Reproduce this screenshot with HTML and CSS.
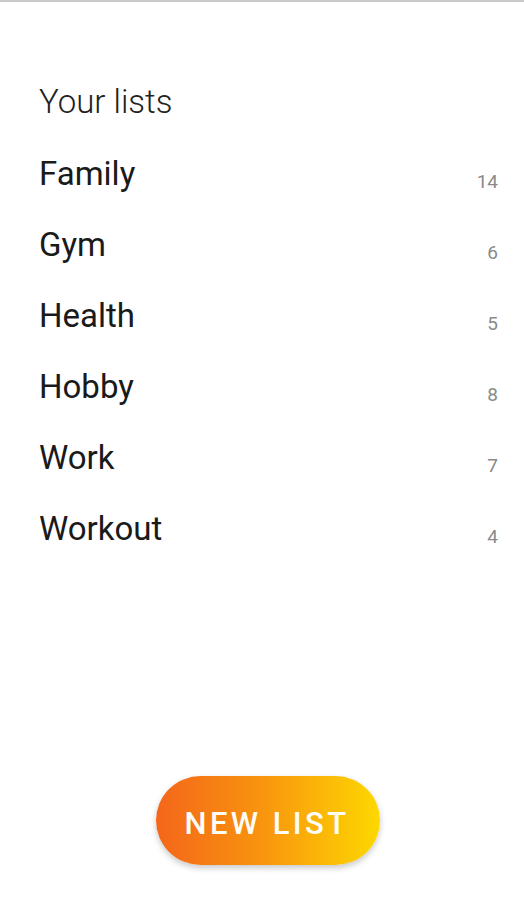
FILE: index.html
```html
<!DOCTYPE html>
<html>
<head>
<meta charset="utf-8">
<link rel="stylesheet" href="styles.css">
</head>
<body>
<div class="screen">
  <div class="topline"></div>
  <main class="content">
    <h1 class="title">Your lists</h1>
    <ul class="lists">
      <li class="row"><span class="name">Family</span><span class="count">14</span></li>
      <li class="row"><span class="name">Gym</span><span class="count">6</span></li>
      <li class="row"><span class="name">Health</span><span class="count">5</span></li>
      <li class="row"><span class="name">Hobby</span><span class="count">8</span></li>
      <li class="row"><span class="name">Work</span><span class="count">7</span></li>
      <li class="row"><span class="name">Workout</span><span class="count">4</span></li>
    </ul>
  </main>
  <footer class="footer">
    <button class="new-btn">NEW LIST</button>
  </footer>
</div>
</body>
</html>
```

FILE: styles.css
```css
html, body {
  margin: 0;
  padding: 0;
  background: #ffffff;
}
body {
  font-family: Roboto, "Noto Sans", sans-serif;
}
.screen {
  width: 524px;
  height: 900px;
  display: flex;
  flex-direction: column;
}
.topline {
  height: 2px;
  background: #c9c9c9;
}
.content {
  flex: 1;
  padding: 0 26px 0 39px;
}
.title {
  margin: 0;
  padding-top: 80px;
  font-size: 33px;
  font-weight: 300;
  color: #222;
  line-height: 40px;
}
.lists {
  list-style: none;
  margin: 32px 0 0;
  padding: 0;
}
.row {
  display: flex;
  justify-content: space-between;
  align-items: baseline;
  height: 71px;
  line-height: 40px;
}
.name {
  font-size: 33px;
  color: #1a1a1a;
}
.count {
  font-size: 19px;
  color: #8a8a8a;
  position: relative;
  top: 3px;
}
.footer {
  display: flex;
  justify-content: center;
  padding-bottom: 35px;
}
.new-btn {
  width: 224px;
  height: 89px;
  border: none;
  border-radius: 45px;
  background: linear-gradient(90deg, #f4661a 0%, #f8920f 45%, #fdd800 100%);
  box-shadow: 0 3px 6px rgba(0,0,0,0.22);
  color: #fdfdf8;
  font-family: Roboto, sans-serif;
  font-size: 31px;
  font-weight: 500;
  letter-spacing: 3.4px;
  padding: 6px 0 0 0;
  text-indent: -2px;
  margin-left: 12px;
}
```
